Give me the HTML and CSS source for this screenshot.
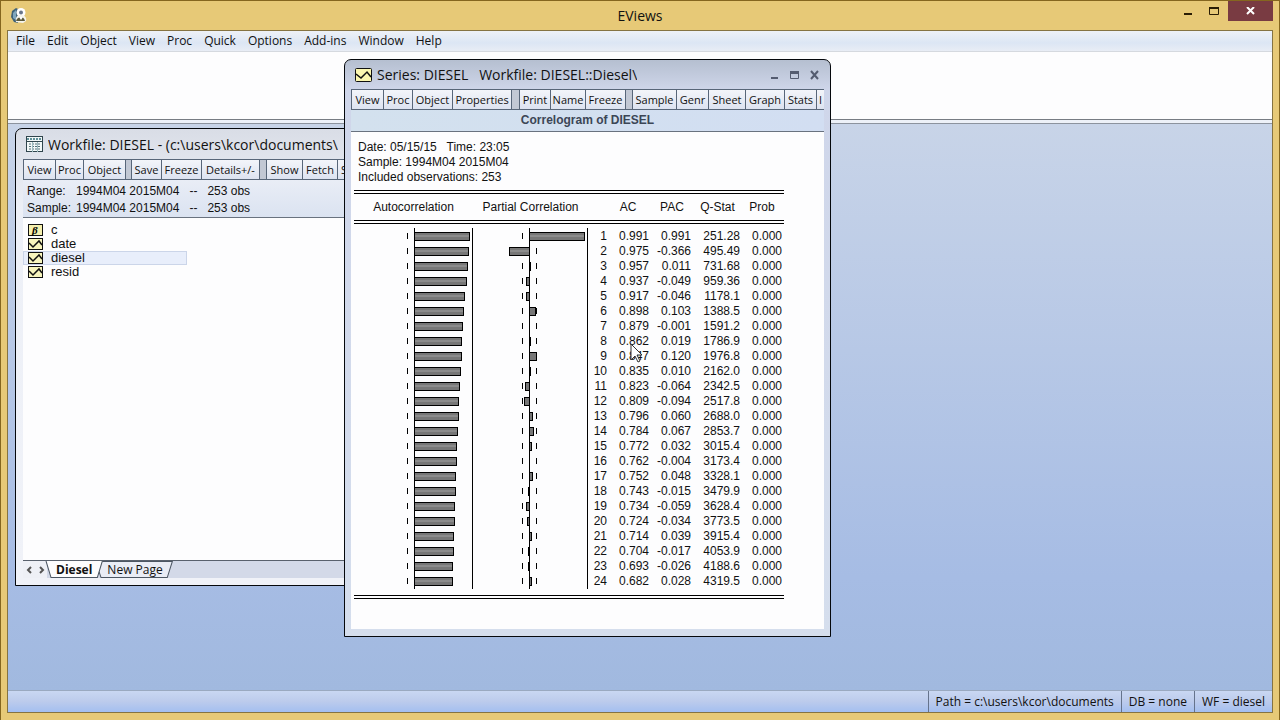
FILE: index.html
```html
<!DOCTYPE html>
<html lang="en">
<head>
<meta charset="utf-8">
<title>EViews</title>
<link rel="stylesheet" href="styles.css">
</head>
<body>
<div class="app">
  <header class="app-title">
    <svg class="app-icon" width="18" height="18" viewBox="0 0 18 18" aria-hidden="true">
      <path d="M6 1 2 4 1 10l3 5 4 1V2z" fill="#3f6277"/>
      <path d="M3 6l3-3v10l-3-2z" fill="#7fa6bd"/>
      <circle cx="11" cy="5.500" r="4.500" fill="#fff"/>
      <path d="M6 15c-1-6 2-7 5-7s6 2 5 6l-3 2z" fill="#f4f4ee"/>
      <circle cx="11" cy="5.500" r="2" fill="#68748a"/>
      <path d="M6 14c1-3 3-4 5-4s3 1 4 4z" fill="#5d5a3a"/>
      <path d="M9 10l2 3 2-3z" fill="#fff"/>
    </svg>
    <h1>EViews</h1>
    <div class="app-controls">
      <button class="cap" aria-label="Minimize"><svg width="10" height="10"><path d="M1 7h8v2H1z" fill="#2a1d05"/></svg></button>
      <button class="cap" aria-label="Maximize"><svg width="11" height="10"><path d="M.5 1.500h9v7h-9z" fill="none" stroke="#2a1d05"/><path d="M0 1h10v2H0z" fill="#2a1d05"/></svg></button>
      <button class="cap close" aria-label="Close"><svg width="9" height="8"><path d="M1 0l7 7M8 0L1 7" stroke="#fff" stroke-width="2"/></svg></button>
    </div>
  </header>
  <div class="client">
    <nav class="menu">
      <button>File</button><button>Edit</button><button>Object</button><button>View</button><button>Proc</button><button>Quick</button><button>Options</button><button>Add-ins</button><button>Window</button><button>Help</button>
    </nav>
    <div class="command" role="textbox" aria-label="Command window" contenteditable="true"></div>
    <div class="splitter"></div>
    <main class="desktop">
      <section class="win workfile">
        <div class="win-title">
          <svg width="18" height="17" viewBox="0 0 18 17" aria-hidden="true"><rect x=".5" y=".5" width="16" height="15" fill="#f2f8f8" stroke="#30454d"/><path d="M1 3h15" stroke="#5f9099" stroke-width="2" stroke-dasharray="2 1"/><path d="M1 5.500h15" stroke="#30454d"/><path d="M3 8h12M3 10.500h12M3 13h12" stroke="#547078" stroke-dasharray="2 1"/><path d="M6.500 6v10M11.500 6v10" stroke="#9dbbc0"/></svg>
          <h2>Workfile: DIESEL - (c:\users\kcor\documents\</h2>
        </div>
        <div class="toolbar">
          <button>View</button><button>Proc</button><button>Object</button><i class="gap"></i><button>Save</button><button>Freeze</button><button>Details+/-</button><i class="gap"></i><button>Show</button><button>Fetch</button><button>Store</button>
        </div>
        <dl class="info">
          <dt>Range:</dt><dd>1994M04 2015M04 &nbsp; -- &nbsp; 253 obs</dd>
          <dt>Sample:</dt><dd>1994M04 2015M04 &nbsp; -- &nbsp; 253 obs</dd>
        </dl>
        <ul class="objects">
          <li><svg width="15" height="12" viewBox="0 0 15 12"><rect x=".5" y=".5" width="14" height="11" fill="#f5f0ae" stroke="#111"/><text x="4" y="10" class="beta">β</text></svg>c</li>
          <li><svg width="15" height="12" viewBox="0 0 15 12"><rect x=".5" y=".5" width="14" height="11" fill="#f8f5bd" stroke="#111"/><path d="M1 5l4 4 6-6 3 4" fill="none" stroke="#111" stroke-width="1.500"/></svg>date</li>
          <li class="selected"><svg width="15" height="12" viewBox="0 0 15 12"><rect x=".5" y=".5" width="14" height="11" fill="#f8f5bd" stroke="#111"/><path d="M1 5l4 4 6-6 3 4" fill="none" stroke="#111" stroke-width="1.500"/></svg>diesel</li>
          <li><svg width="15" height="12" viewBox="0 0 15 12"><rect x=".5" y=".5" width="14" height="11" fill="#f8f5bd" stroke="#111"/><path d="M1 5l4 4 6-6 3 4" fill="none" stroke="#111" stroke-width="1.500"/></svg>resid</li>
        </ul>
        <div class="tabs">
          <button class="arrow" aria-label="Previous page"><svg width="7" height="8"><path d="M5 1L2 4l3 3" fill="none" stroke="#555" stroke-width="2"/></svg></button>
          <button class="arrow" aria-label="Next page"><svg width="7" height="8"><path d="M2 1l3 3-3 3" fill="none" stroke="#555" stroke-width="2"/></svg></button>
          <button class="tab active"><svg class="shape" viewBox="0 0 56 18" preserveAspectRatio="none"><path d="M0 0l5 17.500h46L56 0" fill="#fdfdfe" stroke="#4c5663"/></svg><span>Diesel</span></button>
          <button class="tab"><svg class="shape" viewBox="0 0 73 18" preserveAspectRatio="none"><path d="M2 .5L0 8l3 9.500h65L73 .5z" fill="#e9ecf5" stroke="#4c5663"/></svg><span>New Page</span></button>
        </div>
      </section>

      <section class="win series">
        <div class="win-title">
          <svg width="18" height="14" viewBox="0 0 18 14" aria-hidden="true"><rect x=".5" y=".5" width="16" height="13" rx="1" fill="#fbf7b0" stroke="#111"/><path d="M1 6l5 4 6-6 4 5" fill="none" stroke="#111" stroke-width="1.500"/></svg>
          <h2>Series: DIESEL &nbsp; Workfile: DIESEL::Diesel\</h2>
          <div class="win-controls">
            <button aria-label="Minimize"><svg width="10" height="10"><path d="M1 7h7v2H1z" fill="#545c70"/></svg></button>
            <button aria-label="Maximize"><svg width="10" height="10"><path d="M.5 1.500h8v7h-8z" fill="none" stroke="#545c70"/><path d="M0 1h9v3H0z" fill="#545c70"/></svg></button>
            <button aria-label="Close"><svg width="10" height="10"><path d="M1 1l7 8M8 1L1 9" stroke="#545c70" stroke-width="2"/></svg></button>
          </div>
        </div>
        <div class="toolbar">
          <button>View</button><button>Proc</button><button>Object</button><button>Properties</button><i class="gap"></i><button>Print</button><button>Name</button><button>Freeze</button><i class="gap"></i><button>Sample</button><button>Genr</button><button>Sheet</button><button>Graph</button><button>Stats</button><button class="clipped">I</button>
        </div>
        <h3 class="caption">Correlogram of DIESEL</h3>
        <div class="report">
          <p>Date: 05/15/15 &nbsp; Time: 23:05<br>Sample: 1994M04 2015M04<br>Included observations: 253</p>
          <div class="table-frame">
            <table>
              <colgroup><col class="c-ac"><col class="c-pc"><col class="c-n"><col class="c-v"><col class="c-v"><col class="c-q"><col class="c-p"></colgroup>
              <thead><tr><th>Autocorrelation</th><th>Partial Correlation</th><th></th><th>AC</th><th class="pac">PAC</th><th class="pac">Q-Stat</th><th>Prob</th></tr></thead>
              <tbody id="rows"></tbody>
            </table>
          </div>
        </div>
      </section>
      <svg class="cursor" width="14" height="21" viewBox="0 0 14 21" aria-hidden="true"><path d="M1 1v16l4-4 3 6 2-1-3-6h5z" fill="#fff" stroke="#333"/></svg>
    </main>
    <footer class="status"><span>Path = c:\users\kcor\documents</span><span>DB = none</span><span>WF = diesel</span></footer>
  </div>
</div>
<script src="script.js"></script>
</body>
</html>
```
FILE: styles.css
```css
* { box-sizing: border-box; }
body { margin: 0; font: 12px "Open Sans", "Noto Sans", sans-serif; color: #111; }
h1, h2, h3, p, dl, dd, ul { margin: 0; padding: 0; font-weight: normal; }
button { font: inherit; color: inherit; background: none; border: 0; padding: 0; margin: 0; }
svg { display: block; flex: none; }

.app { height: 100vh; display: flex; flex-direction: column; background: #e7c977; border: 1px solid #85661f; border-bottom: 0; padding: 0 6px 7px; }
.app-title { height: 29px; flex: none; display: grid; grid-template-columns: 1fr auto 1fr; align-items: center; }
.app-icon { margin-left: 3px; }
.app-title h1 { font-size: 14px; }
.app-controls { display: flex; justify-self: end; align-self: start; }
.cap { width: 27px; height: 20px; display: flex; align-items: center; justify-content: center; }
.cap.close { width: 45px; background: #793b42; }

.client { flex: 1; min-height: 0; display: flex; flex-direction: column; border: 1px solid #857342; }
.menu { flex: none; height: 21px; display: flex; align-items: center; gap: 12px; padding: 0 8px 2px; background: linear-gradient(#eef1f7, #dce6f4 60%, #e8edf5); border-bottom: 1px solid #d5d9df; }
.command { flex: none; height: 67px; background: #fdfdfe; }
.splitter { flex: none; height: 5px; background: #edf1f8; border-top: 1px solid #777c83; border-bottom: 1px solid #8c939e; }
.desktop { position: relative; flex: 1; min-height: 0; background: linear-gradient(#c8d4e8, #a6bce4 80%, #a1b9df); }
.status { flex: none; height: 22px; display: flex; justify-content: flex-end; background: linear-gradient(#c9d7f2, #bccbec 50%, #a4bff0); border-top: 1px solid #9aa9c0; }
.status span { padding: 0 7px; line-height: 21px; border-left: 1px solid #65738c; }

.win { position: absolute; display: flex; flex-direction: column; border: 1px solid #05080c; border-radius: 7px 7px 0 0; }
.workfile { left: 7px; top: 4px; width: 480px; height: 458px; padding: 0 7px 7px; background: linear-gradient(#d9dde6, #edf0f7 80px, #f0f2f8); }
.series { left: 336px; top: -65px; width: 487px; height: 578px; padding: 0 6px 7px; background: linear-gradient(#b5bfd0, #cfd6ea 30px, #d5deed); }
.win-title { flex: none; height: 30px; display: flex; align-items: center; padding: 0 4px 0 3px; gap: 4px; }
.series .win-title { height: 29px; padding-left: 4px; }
.win-title h2 { font-size: 14px; white-space: nowrap; overflow: hidden; }
.win-controls { margin-left: auto; display: flex; gap: 10px; }

.toolbar { flex: none; height: 21px; display: grid; overflow: hidden; font-size: 11px; font-weight: 500; border: 1px solid #586679; border-right: 0; background: #c2c8d4; }
.workfile .toolbar { grid-template-columns: 32px 28px 42px 6px 30px 40px 58px 7px 36px 35px 34px; }
.series .toolbar { grid-template-columns: 32px 29px 40px 59px 8px 31px 35px 40px 7px 44px 32px 37px 39px 32px 1fr; }
.toolbar button { background: linear-gradient(#f3f5fa, #dde3f0); border-right: 1px solid #586679; line-height: 18px; }
.toolbar .clipped { border-right: 0; }
.gap { border-right: 1px solid #586679; }

.info { flex: none; height: 38px; display: grid; grid-template-columns: 49px 1fr; padding: 3px 4px 0; font: 12px/17px "Liberation Sans", sans-serif; background: linear-gradient(#e9edf6, #dbe3f1); border-bottom: 1px solid #69727f; }
.objects { flex: 1; list-style: none; padding-top: 5px; background: #fdfdfe; font: 13px/14px "Liberation Sans", sans-serif; }
.objects li { display: flex; align-items: center; width: 164px; height: 14px; padding-left: 5px; gap: 8px; }
.objects .selected { background: #e8eefb; outline: 1px solid #cbd5e9; outline-offset: -1px; }
.beta { font: italic bold 11px "Liberation Serif", serif; }
.tabs { flex: none; height: 18px; display: flex; background: #d3d9e8; border-top: 1px solid #59616d; }
.arrow { width: 12px; display: flex; align-items: center; justify-content: center; background: #eef0f6; }
.tab { position: relative; margin-left: -4px; padding: 0 10px 0 9px; line-height: 16px; }
.tab.active { margin-left: -1px; font-weight: bold; padding: 0 10px; z-index: 1; }
.tab span { position: relative; }
.shape { position: absolute; inset: 0; width: 100%; height: 100%; overflow: visible; }

.caption { flex: none; height: 22px; text-align: center; font: bold 12px/21px "Liberation Sans", sans-serif; color: #3c4656; background: linear-gradient(90deg, #d3e1ee, #d2def2); border-bottom: 1px solid #69727f; }
.report { flex: 1; padding: 8px 3px; background: #fdfdfe; font: 12px/15px "Liberation Sans", sans-serif; }
.report p { padding: 0 4px 5px; }
.table-frame { width: 430px; padding-bottom: 6px; border: 0 solid #000; border-top: 4px double #000; border-bottom: 4px double #000; }
table { width: 100%; table-layout: fixed; border-collapse: separate; border-spacing: 0; }
.c-ac { width: 119px; } .c-pc { width: 115px; } .c-n { width: 19px; } .c-v { width: 42px; } .c-q { width: 49px; }
th { height: 30px; padding: 0; font-weight: normal; white-space: nowrap; border-bottom: 4px double #000; }
th.pac { padding-left: 4px; }
tbody::before { content: ""; display: block; height: 5px; }
td { height: 15px; padding: 0; text-align: right; }
td:last-child { padding-right: 2px; }
td svg { overflow: visible; }
.bar { fill: #777; stroke: #000; }
.shine { fill: #8c8c8c; }
.cursor { position: absolute; left: 622px; top: 219px; }
```
FILE: script.js
```js
const data = [
  [0.991, 0.991, "251.28"], [0.975, -0.366, "495.49"], [0.957, 0.011, "731.68"],
  [0.937, -0.049, "959.36"], [0.917, -0.046, "1178.1"], [0.898, 0.103, "1388.5"],
  [0.879, -0.001, "1591.2"], [0.862, 0.019, "1786.9"], [0.847, 0.120, "1976.8"],
  [0.835, 0.010, "2162.0"], [0.823, -0.064, "2342.5"], [0.809, -0.094, "2517.8"],
  [0.796, 0.060, "2688.0"], [0.784, 0.067, "2853.7"], [0.772, 0.032, "3015.4"],
  [0.762, -0.004, "3173.4"], [0.752, 0.048, "3328.1"], [0.743, -0.015, "3479.9"],
  [0.734, -0.059, "3628.4"], [0.724, -0.034, "3773.5"], [0.714, 0.039, "3915.4"],
  [0.704, -0.017, "4053.9"], [0.693, -0.026, "4188.6"], [0.682, 0.028, "4319.5"]
];

// One row of a bar chart: zero axis, right edge and the confidence ticks.
function chart(value, width, axis) {
  const size = Math.round(Math.abs(value) * 55);
  const left = value < 0 ? axis - size : axis;
  let out = `<svg width="${width}" height="15">`;
  out += `<path d="M${axis - 6.5} 4v6M${axis + 7.5} 4v6" stroke="#000"/>`;
  if (size > 0) out += `<rect class="bar" x="${left + 0.5}" y="3.5" width="${size}" height="8"/>`;
  if (size > 9) out += `<rect class="shine" x="${left + 1}" y="6" width="${size - 1}" height="2"/>`;
  out += `<path d="M${axis + 0.5} -1v16M${width - 0.5} -1v16" stroke="#000"/></svg>`;
  return out;
}

document.getElementById("rows").innerHTML = data.map(([ac, pac, q], i) =>
  `<tr><td>${chart(ac, 119, 60)}</td><td>${chart(pac, 115, 56)}</td><td>${i + 1}</td>` +
  `<td>${ac.toFixed(3)}</td><td>${pac.toFixed(3)}</td><td>${q}</td><td>0.000</td></tr>`
).join("");
```
